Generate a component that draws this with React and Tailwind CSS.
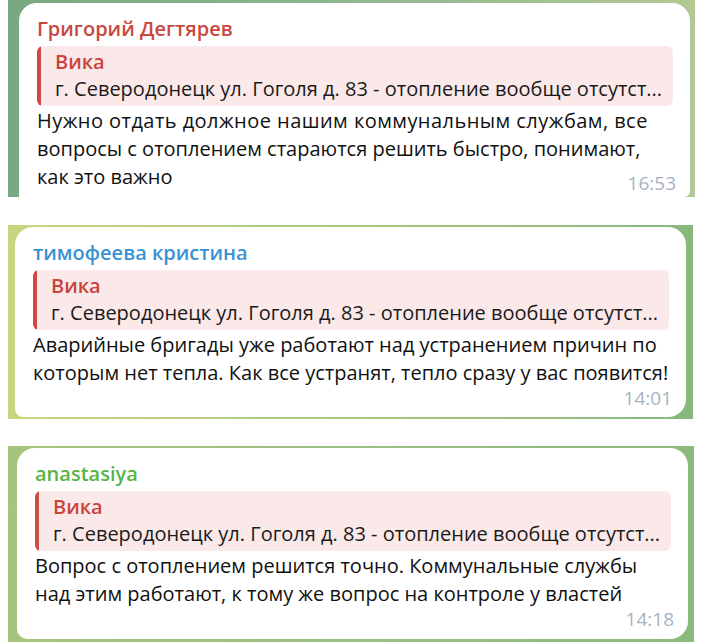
import React from "react";

const QUOTE = "г. Северодонецк ул. Гоголя д. 83 - отопление вообще отсутст...";

function Bubble({ name, nameClass, lines, time, inline }) {
  return (
    <div className="flex flex-col flex-1 bg-white pl-[18px] pr-[14px] pt-[14px]">
      <div className={`text-[20px] leading-[24px] font-semibold ${nameClass}`}>{name}</div>
      <div className="mt-[5px] mr-[3px] flex rounded-[6px] bg-[#fbe8e8] overflow-hidden">
        <div className="w-[4px] bg-[#cc4a42] shrink-0" />
        <div className="pl-[14px] pt-[2px] pb-[4px] text-[20px] leading-[27px]">
          <div className="text-[#c8453e] font-semibold">Вика</div>
          <div className="text-[#1a1a1a] whitespace-nowrap">{QUOTE}</div>
        </div>
      </div>
      <div className="mt-[1px] text-[20px] leading-[28px] text-[#111] whitespace-nowrap">
        {lines.map((l, i) => (
          <div key={i} className={l.cls}>{l.t}</div>
        ))}
      </div>
      {inline ? (
        <div className="flex justify-end -mt-[18px] text-[19px] leading-[20px] text-[#a6b3bf]">{time}</div>
      ) : (
        <div className="flex justify-end mt-[1px] text-[19px] leading-[20px] text-[#a6b3bf]">{time}</div>
      )}
    </div>
  );
}

export default function App() {
  return (
    <div
      className="w-[702px] h-[642px] bg-white flex flex-col"
      style={{ fontFamily: '"Open Sans", "Noto Sans", sans-serif' }}
    >
      <div className="h-[197px] ml-[8px] mr-[7px] flex pt-[3px] pl-[11px] pr-[5px] bg-gradient-to-r from-[#77a982] via-[#8fb690] to-[#b3c993]">
        <div className="flex flex-1 rounded-t-[18px] rounded-br-[6px] overflow-hidden">
          <Bubble
            name="Григорий Дегтярев"
            nameClass="text-[#c9483f]"
            inline
            lines={[
              { t: "Нужно отдать должное нашим коммунальным службам, все", cls: "tracking-[0.45px]" },
              { t: "вопросы с отоплением стараются решить быстро, понимают,", cls: "" },
              { t: "как это важно", cls: "" },
            ]}
            time="16:53"
          />
        </div>
      </div>
      <div className="h-[28px]" />
      <div className="h-[194px] ml-[8px] mr-[9px] flex pt-[2px] pl-[7px] pr-[7px] pb-[2px] bg-gradient-to-r from-[#c9d580] via-[#a9c682] to-[#88b87a]">
        <div className="flex flex-1 rounded-[18px] rounded-bl-[8px] overflow-hidden">
          <Bubble
            name="тимофеева кристина"
            nameClass="text-[#3a92d4]"
            lines={[
              { t: "Аварийные бригады уже работают над устранением причин по", cls: "" },
              { t: "которым нет тепла. Как все устранят, тепло сразу у вас появится!", cls: "" },
            ]}
            time="14:01"
          />
        </div>
      </div>
      <div className="h-[27px]" />
      <div className="h-[196px] ml-[8px] mr-[8px] flex pt-[2px] pl-[9px] pr-[6px] pb-[3px] bg-gradient-to-r from-[#a7c47e] via-[#9cbf85] to-[#8db97c]">
        <div className="flex flex-1 rounded-[18px] rounded-bl-[10px] overflow-hidden">
          <Bubble
            name="anastasiya"
            nameClass="text-[#58b443]"
            lines={[
              { t: "Вопрос с отоплением решится точно. Коммунальные службы", cls: "" },
              { t: "над этим работают, к тому же вопрос на контроле у властей", cls: "" },
            ]}
            time="14:18"
          />
        </div>
      </div>
    </div>
  );
}
